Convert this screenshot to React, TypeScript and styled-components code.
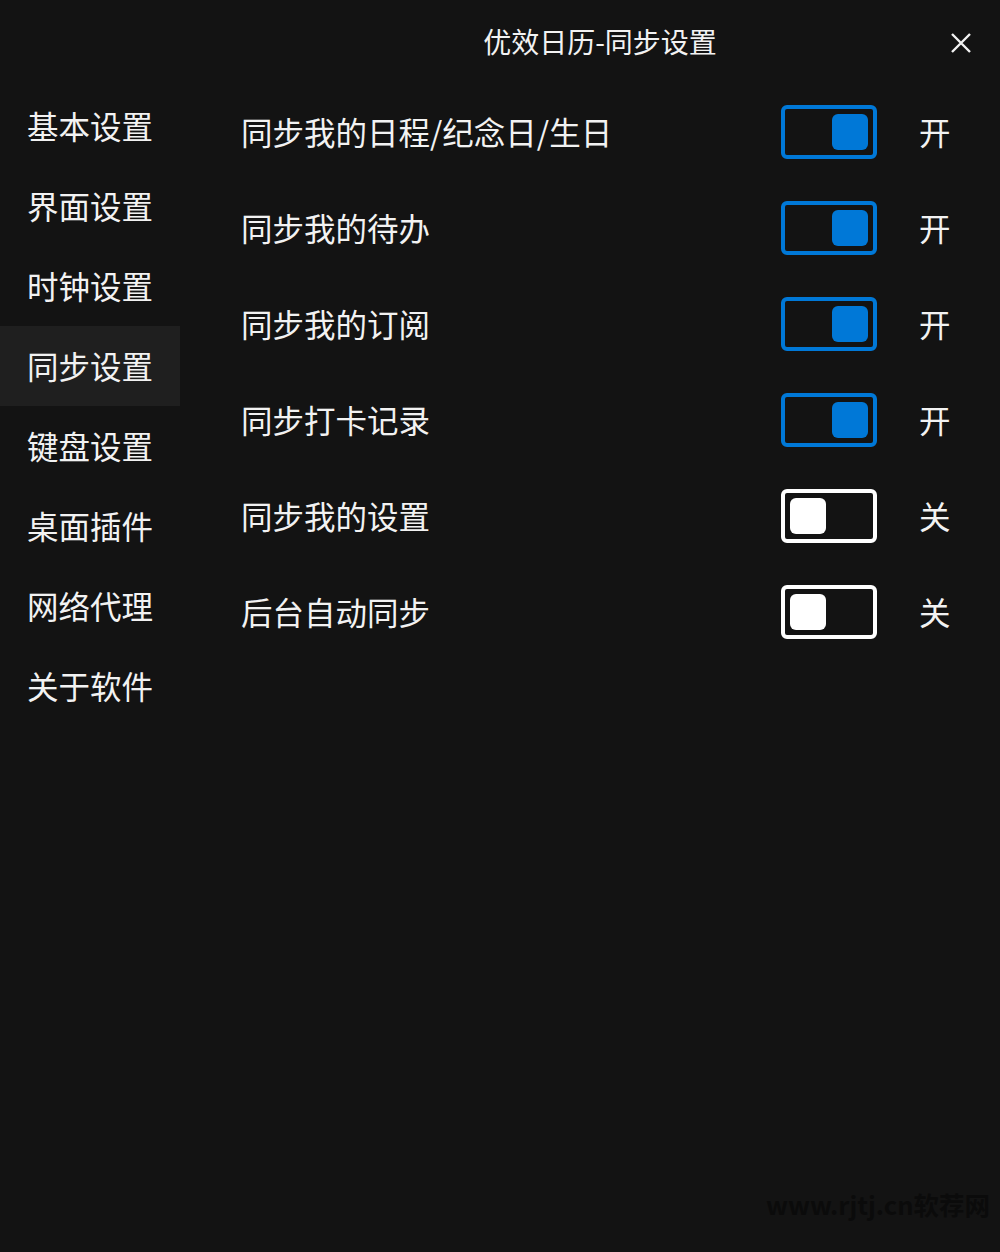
import React, { useState } from "react";
import styled, { createGlobalStyle } from "styled-components";

const GlobalStyle = createGlobalStyle`
  html, body {
    margin: 0;
    padding: 0;
    background: #131313;
  }
  * {
    box-sizing: border-box;
  }
`;

const Window = styled.div`
  position: relative;
  width: 1000px;
  height: 1252px;
  background: #131313;
  color: #f2f2f2;
  font-family: "Noto Sans CJK SC", "Noto Sans", sans-serif;
  overflow: hidden;
`;

const TitleBar = styled.header`
  height: 84px;
  display: flex;
  align-items: center;
  padding-left: 200px;
  position: relative;
`;

const Title = styled.h1`
  flex: 1;
  margin: 0;
  text-align: center;
  font-size: 28px;
  font-weight: 400;
  line-height: 1;
  padding-bottom: 2px;
`;

const CloseButton = styled.button`
  position: absolute;
  top: 30px;
  right: 26px;
  width: 26px;
  height: 26px;
  padding: 0;
  border: none;
  background: transparent;
  color: #f2f2f2;
  cursor: pointer;
  display: flex;
  align-items: center;
  justify-content: center;
`;

const Body = styled.div`
  display: flex;
`;

const Sidebar = styled.nav`
  width: 180px;
  padding-top: 2px;
  display: flex;
  flex-direction: column;
`;

const NavItem = styled.div<{ $active?: boolean }>`
  height: 80px;
  display: flex;
  align-items: center;
  padding-left: 27px;
  padding-bottom: 3px;
  font-size: 31.5px;
  background: ${(p) => (p.$active ? "#1f1f1f" : "transparent")};
`;

const Content = styled.section`
  flex: 1;
  padding-left: 61px;
  display: flex;
  flex-direction: column;
`;

const Row = styled.div`
  height: 96px;
  display: flex;
  align-items: center;
`;

const Label = styled.div`
  width: 540px;
  font-size: 31.5px;
  padding-bottom: 3px;
`;

const Toggle = styled.div<{ $on: boolean }>`
  width: 96px;
  height: 54px;
  border: 4px solid ${(p) => (p.$on ? "#0078d7" : "#ffffff")};
  border-radius: 6px;
  padding: 5px;
  display: flex;
  justify-content: ${(p) => (p.$on ? "flex-end" : "flex-start")};
  cursor: pointer;
`;

const Thumb = styled.div<{ $on: boolean }>`
  width: 36px;
  height: 36px;
  border-radius: 6px;
  background: ${(p) => (p.$on ? "#0078d7" : "#ffffff")};
`;

const State = styled.div`
  margin-left: 42px;
  font-size: 31.5px;
  padding-bottom: 3px;
`;

const Watermark = styled.div`
  position: absolute;
  right: 10px;
  bottom: 36px;
  font-size: 25.5px;
  font-weight: 700;
  color: #0b0b0b;
  line-height: 1;
`;

const navItems = ["基本设置", "界面设置", "时钟设置", "同步设置", "键盘设置", "桌面插件", "网络代理", "关于软件"];

const initialRows = [
  { label: "同步我的日程/纪念日/生日", on: true },
  { label: "同步我的待办", on: true },
  { label: "同步我的订阅", on: true },
  { label: "同步打卡记录", on: true },
  { label: "同步我的设置", on: false },
  { label: "后台自动同步", on: false },
];

export default function App() {
  const [rows, setRows] = useState(initialRows);

  const flip = (i: number) =>
    setRows((r) => r.map((row, j) => (j === i ? { ...row, on: !row.on } : row)));

  return (
    <Window>
      <GlobalStyle />
      <TitleBar>
        <Title>优效日历-同步设置</Title>
        <CloseButton aria-label="关闭">
          <svg width="22" height="22" viewBox="0 0 22 22">
            <path d="M2 2 L20 20 M20 2 L2 20" stroke="currentColor" strokeWidth="2.4" fill="none" />
          </svg>
        </CloseButton>
      </TitleBar>
      <Body>
        <Sidebar>
          {navItems.map((item) => (
            <NavItem key={item} $active={item === "同步设置"}>
              {item}
            </NavItem>
          ))}
        </Sidebar>
        <Content>
          {rows.map((row, i) => (
            <Row key={row.label}>
              <Label>{row.label}</Label>
              <Toggle $on={row.on} onClick={() => flip(i)}>
                <Thumb $on={row.on} />
              </Toggle>
              <State>{row.on ? "开" : "关"}</State>
            </Row>
          ))}
        </Content>
      </Body>
      <Watermark>www.rjtj.cn软荐网</Watermark>
    </Window>
  );
}
